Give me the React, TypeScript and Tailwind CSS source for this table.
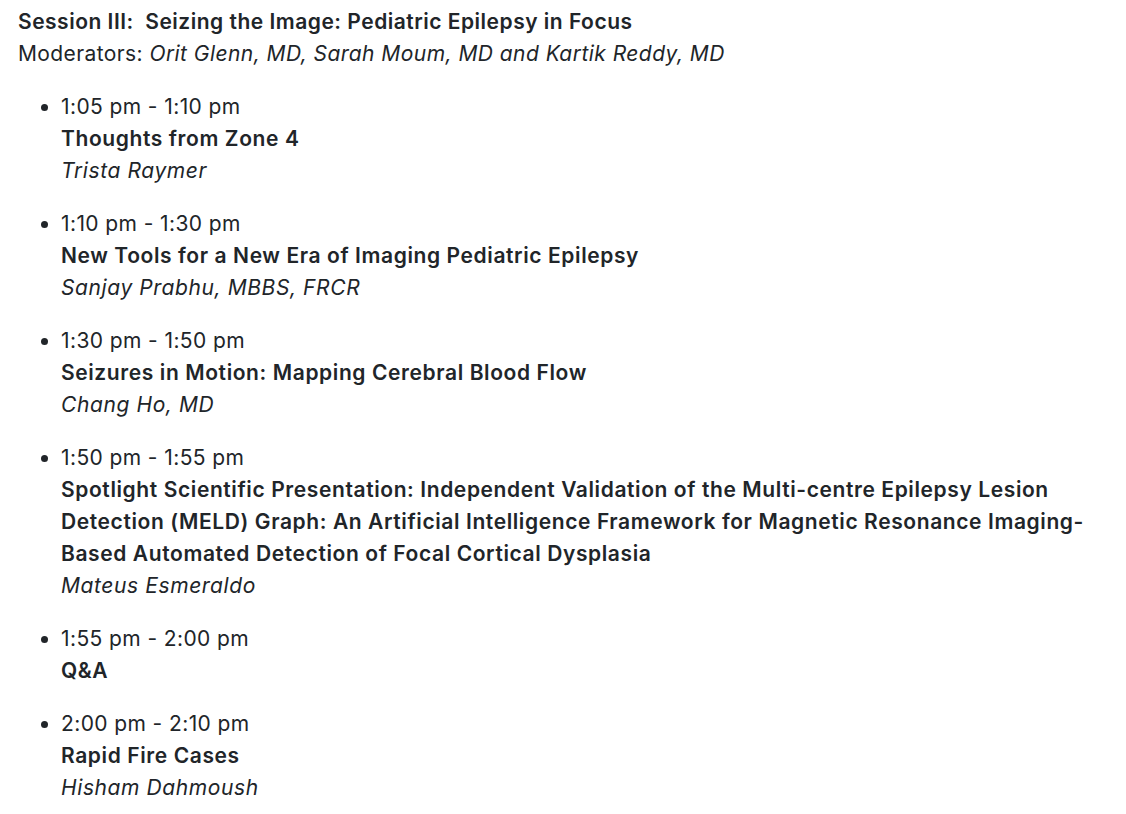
const talks = [
  { time: "1:05 pm - 1:10 pm", title: "Thoughts from Zone 4", speaker: "Trista Raymer" },
  { time: "1:10 pm - 1:30 pm", title: "New Tools for a New Era of Imaging Pediatric Epilepsy", speaker: "Sanjay Prabhu, MBBS, FRCR" },
  { time: "1:30 pm - 1:50 pm", title: "Seizures in Motion: Mapping Cerebral Blood Flow", speaker: "Chang Ho, MD" },
  {
    time: "1:50 pm - 1:55 pm",
    title:
      "Spotlight Scientific Presentation: Independent Validation of the Multi-centre Epilepsy Lesion Detection (MELD) Graph: An Artificial Intelligence Framework for Magnetic Resonance Imaging-Based Automated Detection of Focal Cortical Dysplasia",
    speaker: "Mateus Esmeraldo",
  },
  { time: "1:55 pm - 2:00 pm", title: "Q&A" },
  { time: "2:00 pm - 2:10 pm", title: "Rapid Fire Cases", speaker: "Hisham Dahmoush" },
];

export default function App() {
  return (
    <div className="min-h-screen bg-white px-[18px] pt-[6px] font-['Inter',sans-serif] text-[21px] leading-[32px] tracking-[0.4px] text-[#212529]">
      {/* session header */}
      <h3 className="font-semibold tracking-[0.5px]">Session III:&nbsp; Seizing the Image: Pediatric Epilepsy in Focus</h3>
      <p>
        Moderators: <em className="tracking-[0.45px]">Orit Glenn, MD, Sarah Moum, MD and Kartik Reddy, MD</em>
      </p>

      {/* talks */}
      <ul className="mt-[21px] w-[1090px] list-disc pl-[43px]">
        {talks.map((t) => (
          <li key={t.time} className="mb-[21px]">
            <div>{t.time}</div>
            <div className="font-semibold tracking-[0.6px]">{t.title}</div>
            {t.speaker && <div className="italic tracking-[0.6px]">{t.speaker}</div>}
          </li>
        ))}
      </ul>
    </div>
  );
}
